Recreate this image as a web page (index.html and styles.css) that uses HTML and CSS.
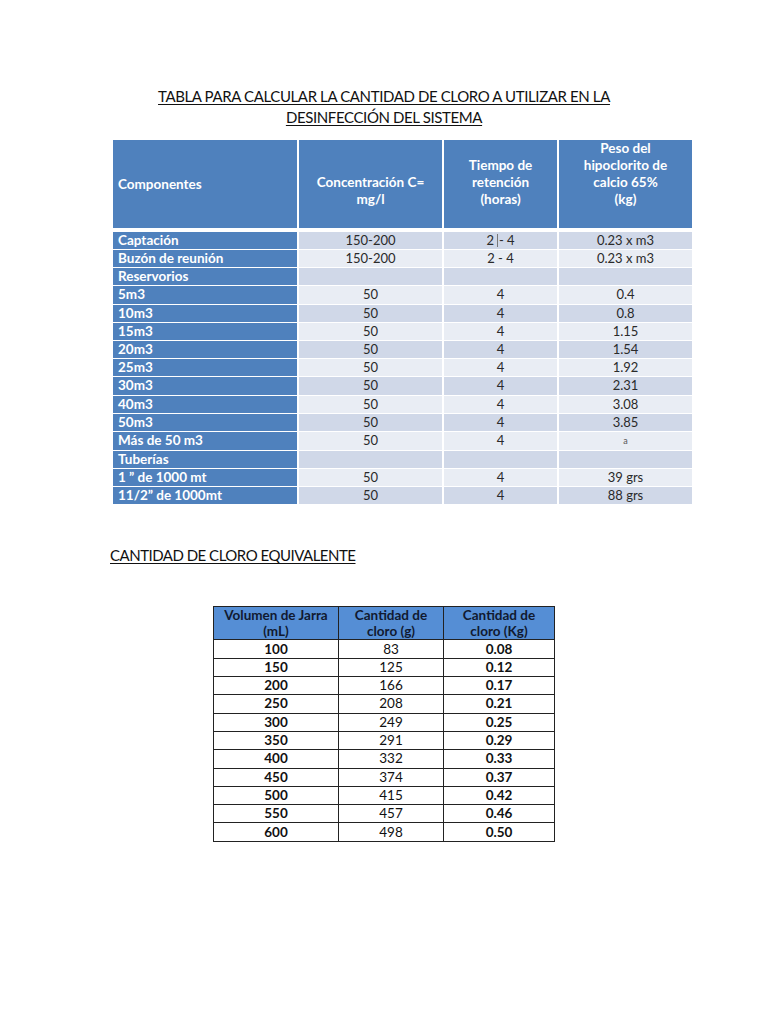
FILE: index.html
```html
<!DOCTYPE html>
<html lang="es">
<head>
<meta charset="utf-8">
<title>Tabla cloro</title>
<link rel="stylesheet" href="styles.css">
</head>
<body>
<div class="page">
  <h1 class="title"><span>TABLA PARA CALCULAR LA CANTIDAD DE CLORO A UTILIZAR EN LA</span><br><span>DESINFECCIÓN DEL SISTEMA</span></h1>

  <table class="t1">
    <colgroup>
      <col class="c1"><col class="c2"><col class="c3"><col class="c4">
    </colgroup>
    <thead>
      <tr>
        <th class="h-left">Componentes</th>
        <th>Concentración C=<br>mg/l</th>
        <th>Tiempo de<br>retención<br>(horas)</th>
        <th>Peso del<br>hipoclorito de<br>calcio 65%<br>(kg)</th>
      </tr>
    </thead>
    <tbody>
      <tr class="dk"><td>Captación</td><td>150-200</td><td>2<span class="cursor"></span>- 4</td><td>0.23 x m3</td></tr>
      <tr class="lt"><td>Buzón de reunión</td><td>150-200</td><td>2 - 4</td><td>0.23 x m3</td></tr>
      <tr class="dk"><td>Reservorios</td><td></td><td></td><td></td></tr>
      <tr class="lt"><td>5m3</td><td>50</td><td>4</td><td>0.4</td></tr>
      <tr class="dk"><td>10m3</td><td>50</td><td>4</td><td>0.8</td></tr>
      <tr class="lt"><td>15m3</td><td>50</td><td>4</td><td>1.15</td></tr>
      <tr class="dk"><td>20m3</td><td>50</td><td>4</td><td>1.54</td></tr>
      <tr class="lt"><td>25m3</td><td>50</td><td>4</td><td>1.92</td></tr>
      <tr class="dk"><td>30m3</td><td>50</td><td>4</td><td>2.31</td></tr>
      <tr class="lt"><td>40m3</td><td>50</td><td>4</td><td>3.08</td></tr>
      <tr class="dk"><td>50m3</td><td>50</td><td>4</td><td>3.85</td></tr>
      <tr class="lt"><td>Más de 50 m3</td><td>50</td><td>4</td><td><span class="small">a</span></td></tr>
      <tr class="dk"><td>Tuberías</td><td></td><td></td><td></td></tr>
      <tr class="lt"><td>1 ” de 1000 mt</td><td>50</td><td>4</td><td>39 grs</td></tr>
      <tr class="dk"><td>11/2” de 1000mt</td><td>50</td><td>4</td><td>88 grs</td></tr>
    </tbody>
  </table>

  <h2 class="subtitle">CANTIDAD DE CLORO EQUIVALENTE</h2>

  <table class="t2">
    <colgroup>
      <col class="d1"><col class="d2"><col class="d3">
    </colgroup>
    <thead>
      <tr>
        <th>Volumen de Jarra<br>(mL)</th>
        <th>Cantidad de<br>cloro (g)</th>
        <th>Cantidad de<br>cloro (Kg)</th>
      </tr>
    </thead>
    <tbody>
      <tr><td>100</td><td>83</td><td>0.08</td></tr>
      <tr><td>150</td><td>125</td><td>0.12</td></tr>
      <tr><td>200</td><td>166</td><td>0.17</td></tr>
      <tr><td>250</td><td>208</td><td>0.21</td></tr>
      <tr><td>300</td><td>249</td><td>0.25</td></tr>
      <tr><td>350</td><td>291</td><td>0.29</td></tr>
      <tr><td>400</td><td>332</td><td>0.33</td></tr>
      <tr><td>450</td><td>374</td><td>0.37</td></tr>
      <tr><td>500</td><td>415</td><td>0.42</td></tr>
      <tr><td>550</td><td>457</td><td>0.46</td></tr>
      <tr><td>600</td><td>498</td><td>0.50</td></tr>
    </tbody>
  </table>
</div>
</body>
</html>
```

FILE: styles.css
```css
html, body {
  margin: 0;
  padding: 0;
  background: #ffffff;
}

body {
  font-family: Lato, "Open Sans", "Liberation Sans", sans-serif;
  color: #1a1a1a;
}

.page {
  width: 768px;
  padding-top: 86px;
}

.title {
  margin: 0;
  text-align: center;
  font-size: 15px;
  font-weight: 400;
  line-height: 21px;
  letter-spacing: -0.38px;
  color: #111;
}

.title span {
  text-decoration: underline;
  text-underline-offset: 2px;
}

/* ---------- table 1 ---------- */
.t1 {
  margin: 12px 0 0 113px;
  width: 579px;
  border-collapse: collapse;
  table-layout: fixed;
  font-size: 13px;
}

.c1 { width: 185px; }
.c2 { width: 145px; }
.c3 { width: 115px; }
.c4 { width: 134px; }

.t1 th {
  background: #4f81bd;
  color: #ffffff;
  font-weight: 700;
  font-size: 13.5px;
  line-height: 17px;
  height: 87px;
  padding: 0 2px 20px;
  vertical-align: bottom;
  text-align: center;
  border-left: 2px solid #fff;
  border-right: 2px solid #fff;
  border-bottom: 4px solid #fff;
  box-sizing: border-box;
  white-space: nowrap;
}

.t1 th.h-left {
  text-align: left;
  padding: 0 0 0 5px;
  vertical-align: middle;
}

.t1 td {
  height: 18.2px;
  padding: 0;
  line-height: 17px;
  text-align: center;
  color: #2a2a2a;
  border-left: 2px solid #fff;
  border-right: 2px solid #fff;
  border-bottom: 1px solid #fff;
  box-sizing: border-box;
  white-space: nowrap;
}

.t1 td:first-child {
  background: #4f81bd;
  color: #ffffff;
  font-weight: 700;
  font-size: 13.5px;
  text-align: left;
  padding-left: 5px;
}

.t1 th:first-child,
.t1 td:first-child { border-left: 0; }
.t1 th:last-child,
.t1 td:last-child { border-right: 0; }

.t1 tr.dk td { background: #d0d8e8; }
.t1 tr.lt td { background: #e9edf4; }
.t1 tr td:first-child { background: #4f81bd; }

.cursor {
  display: inline-block;
  width: 1px;
  height: 13px;
  background: #777;
  vertical-align: -2px;
  margin: 0 1px 0 3px;
}

.small {
  font-size: 9px;
  color: #555;
  vertical-align: 2px;
}

/* ---------- subtitle ---------- */
.subtitle {
  margin: 40px 0 0 110px;
  font-size: 15px;
  font-weight: 400;
  line-height: 21px;
  letter-spacing: -0.5px;
  text-decoration: underline;
  text-underline-offset: 2px;
  color: #111;
}

/* ---------- table 2 ---------- */
.t2 {
  margin: 40px 0 0 213px;
  width: 341px;
  border-collapse: collapse;
  table-layout: fixed;
  font-size: 13.5px;
}

.d1 { width: 125px; }
.d2 { width: 105px; }
.d3 { width: 111px; }

.t2 th {
  background: #558ed5;
  color: #111a30;
  font-weight: 700;
  line-height: 16px;
  height: 32px;
  padding: 0;
  text-align: center;
  vertical-align: middle;
  border: 1px solid #222;
  box-sizing: border-box;
}

.t2 td {
  height: 18.3px;
  padding: 0;
  line-height: 17px;
  text-align: center;
  border: 1px solid #222;
  box-sizing: border-box;
  color: #111;
}

.t2 td:first-child,
.t2 td:last-child { font-weight: 700; }
```
